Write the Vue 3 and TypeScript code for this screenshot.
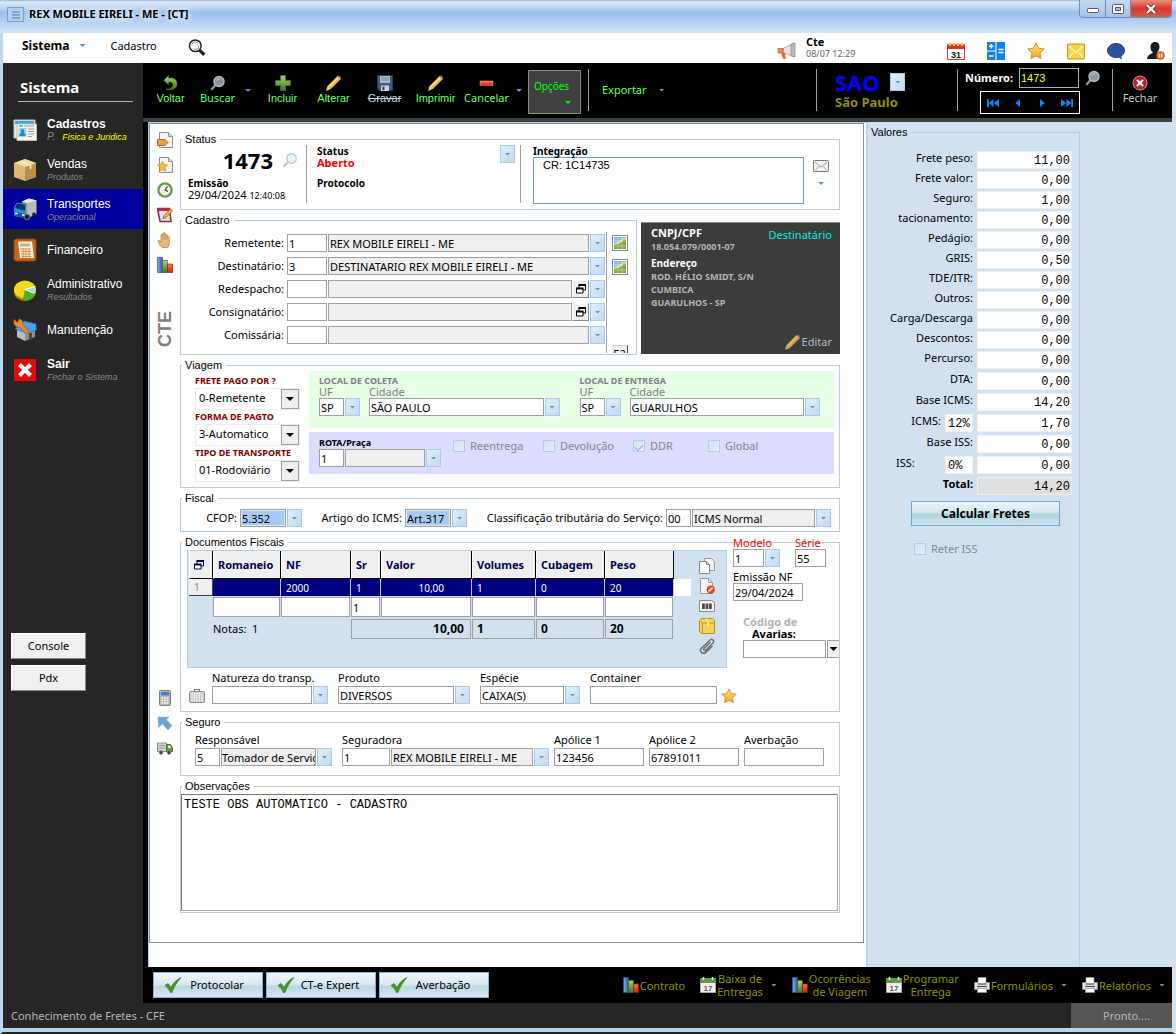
<script setup lang="ts">
import { ref } from 'vue'

interface MenuItem { label: string; sub?: string; icon: string; bold?: boolean; active?: boolean; prefix?: string }
interface Tool { label: string; icon: string; arrow?: boolean; wide?: boolean; off?: boolean; narrow?: boolean }
interface Party { id: string; label: string; code: string; name: string; lookup?: boolean }
interface ValueRow { id: string; label: string; value: string; rate?: string; total?: boolean; left?: boolean }

const menu: MenuItem[] = [
  { label: 'Cadastros', sub: 'Fisica e Juridica', icon: 'cards', bold: true, prefix: 'P.' },
  { label: 'Vendas', sub: 'Produtos', icon: 'box' },
  { label: 'Transportes', sub: 'Operacional', icon: 'bluetruck', active: true },
  { label: 'Financeiro', icon: 'ledger' },
  { label: 'Administrativo', sub: 'Resultados', icon: 'pie' },
  { label: 'Manutenção', icon: 'house' },
  { label: 'Sair', sub: 'Fechar o Sistema', icon: 'exit', bold: true },
]

const topIcons = [
  { icon: 'cal31', label: 'Agenda', day: '31' },
  { icon: 'calcblue', label: 'Calculadora' },
  { icon: 'star', label: 'Favoritos' },
  { icon: 'mail', label: 'Mensagens' },
  { icon: 'chat', label: 'Chat' },
  { icon: 'user', label: 'Usuário' },
]

const tools: Tool[] = [
  { label: 'Voltar', icon: 'back', narrow: true },
  { label: 'Buscar', icon: 'lens', arrow: true, wide: true, narrow: true },
  { label: 'Incluir', icon: 'plus' },
  { label: 'Alterar', icon: 'pencil' },
  { label: 'Gravar', icon: 'disk', off: true },
  { label: 'Imprimir', icon: 'pencil' },
  { label: 'Cancelar', icon: 'minus', arrow: true, wide: true },
]

const railTop = ['pagetag', 'pagestar', 'clock', 'note', 'hand', 'bars']
const railBottom = ['calc', 'bluearrow', 'greentruck']

const parties: Party[] = [
  { id: 'remetente', label: 'Remetente:', code: '1', name: 'REX MOBILE EIRELI - ME' },
  { id: 'destinatario', label: 'Destinatário:', code: '3', name: 'DESTINATARIO REX MOBILE EIRELI - ME' },
  { id: 'redespacho', label: 'Redespacho:', code: '', name: '', lookup: true },
  { id: 'consignatario', label: 'Consignatário:', code: '', name: '', lookup: true },
  { id: 'comissaria', label: 'Comissária:', code: '', name: '' },
]

const combos = [
  { id: 'pago', label: 'FRETE PAGO POR ?', value: '0-Remetente' },
  { id: 'forma', label: 'FORMA DE PAGTO', value: '3-Automatico' },
  { id: 'tipo', label: 'TIPO DE TRANSPORTE', value: '01-Rodoviário' },
]

const places = [
  { id: 'coleta', title: 'LOCAL DE COLETA', uf: 'SP', city: 'SÃO PAULO' },
  { id: 'entrega', title: 'LOCAL DE ENTREGA', uf: 'SP', city: 'GUARULHOS' },
]

const flags = ref([
  { id: 'reentrega', label: 'Reentrega', on: false },
  { id: 'devolucao', label: 'Devolução', on: false },
  { id: 'ddr', label: 'DDR', on: true },
  { id: 'global', label: 'Global', on: false },
])

const docCols = ['Romaneio', 'NF', 'Sr', 'Valor', 'Volumes', 'Cubagem', 'Peso']
const docRow = ['', '2000', '1', '10,00', '1', '0', '20']
const docNew = ['', '', '1', '', '', '', '']
const docIcons = ['copy', 'pageno', 'barcode', 'yellowbox', 'clip']

const values: ValueRow[] = [
  { id: 'v1', label: 'Frete peso:', value: '11,00' },
  { id: 'v2', label: 'Frete valor:', value: '0,00' },
  { id: 'v3', label: 'Seguro:', value: '1,00' },
  { id: 'v4', label: 'tacionamento:', value: '0,00' },
  { id: 'v5', label: 'Pedágio:', value: '0,00' },
  { id: 'v6', label: 'GRIS:', value: '0,50' },
  { id: 'v7', label: 'TDE/ITR:', value: '0,00' },
  { id: 'v8', label: 'Outros:', value: '0,00' },
  { id: 'v9', label: 'Carga/Descarga', value: '0,00' },
  { id: 'v10', label: 'Descontos:', value: '0,00' },
  { id: 'v11', label: 'Percurso:', value: '0,00' },
]
const taxes: ValueRow[] = [
  { id: 't1', label: 'DTA:', value: '0,00' },
  { id: 't2', label: 'Base ICMS:', value: '14,20' },
  { id: 't3', label: 'ICMS:', value: '1,70', rate: '12%' },
  { id: 't4', label: 'Base ISS:', value: '0,00' },
  { id: 't5', label: 'ISS:', value: '0,00', rate: '0%', left: true },
  { id: 't6', label: 'Total:', value: '14,20', total: true },
]

const reports = [
  { lines: ['Contrato'], icon: 'bars', arrow: false },
  { lines: ['Baixa de', 'Entregas'], icon: 'cal17', arrow: true },
  { lines: ['Ocorrências', 'de Viagem'], icon: 'bars', arrow: false },
  { lines: ['Programar', 'Entrega'], icon: 'cal17', arrow: false },
  { lines: ['Formulários'], icon: 'printer', arrow: true },
  { lines: ['Relatórios'], icon: 'printer', arrow: true },
]

const numero = ref('1473')
const integracao = ref('CR: 1C14735')
const obs = ref('TESTE OBS AUTOMATICO - CADASTRO')
</script>

<template>
  <svg class="defs" width="0" height="0" aria-hidden="true">
    <defs>
      <linearGradient id="g-green" x1="0" y1="0" x2="0" y2="1"><stop offset="0" stop-color="#a9d27a" /><stop offset="1" stop-color="#3f7a1c" /></linearGradient>
      <linearGradient id="g-blue" x1="0" y1="0" x2="1" y2="0"><stop offset="0" stop-color="#8ab4e8" /><stop offset="1" stop-color="#24509c" /></linearGradient>
      <linearGradient id="g-gold" x1="0" y1="0" x2="0" y2="1"><stop offset="0" stop-color="#ffe680" /><stop offset="1" stop-color="#f0a62a" /></linearGradient>
      <linearGradient id="g-red" x1="0" y1="0" x2="0" y2="1"><stop offset="0" stop-color="#ff7a4a" /><stop offset="1" stop-color="#d81e0a" /></linearGradient>
    </defs>
    <symbol id="i-mag" viewBox="0 0 16 16"><circle cx="6.500" cy="6" r="5.200" fill="#fff" stroke="#222" stroke-width="1.300" /><circle cx="6.500" cy="6" r="3.300" fill="none" stroke="#888" stroke-width=".8" stroke-dasharray="7 4" /><path d="M10.300 10 14.500 14" stroke="#222" stroke-width="2.800" /></symbol>
    <symbol id="i-lens" viewBox="0 0 16 16"><path d="M6 9.500 2 14" stroke="#8f959b" stroke-width="2.400" stroke-linecap="round" /><circle cx="9" cy="6.500" r="5" fill="#8c96a2" stroke="#b9bec4" stroke-width="1.400" /><path d="M6.500 5.500Q8 3.500 10 3.800" stroke="#c8d2dc" fill="none" /></symbol>
    <symbol id="i-lenslight" viewBox="0 0 16 16"><path d="M6 10 2 14" stroke="#c8c8c8" stroke-width="2.200" stroke-linecap="round" /><circle cx="9.500" cy="6.500" r="4.800" fill="#e4f0fa" stroke="#bfc8d0" stroke-width="1.300" /></symbol>
    <symbol id="i-horn" viewBox="0 0 20 18"><path d="M6 6.500 17 1v14L6 10.500z" fill="#e4e4e4" stroke="#999" stroke-width=".8" /><path d="M14 2.500 18 1v14l-4-1.500z" fill="#bcbcbc" stroke="#888" stroke-width=".7" /><path d="M1 6.500h5v4.500H1z" fill="#f08a5a" stroke="#d0582c" stroke-width=".7" /><path d="M4 11h4l1 6H6z" fill="#ea6a34" /></symbol>
    <symbol id="i-cal31" viewBox="0 0 18 18"><path d="M.5 3h17v14.500H.5z" fill="#fff" stroke="#c33" /><path d="M0 2.500h18V7H0z" fill="#e03030" /><path d="M2 1h2v3H2zM6 1h2v3H6zM10 1h2v3h-2zM14 1h2v3h-2z" fill="#f7d038" /></symbol>
    <symbol id="i-calcblue" viewBox="0 0 18 18"><path d="M0 0h8.500v8.500H0zM9.500 0H18v18H9.500zM0 9.500h8.500V18H0z" fill="#1380ee" /><path d="M2 4.300h4.500M4.250 2v4.500M2 14h4.500M11.500 7.500h5M11.500 10.500h5" stroke="#fff" stroke-width="1.500" /></symbol>
    <symbol id="i-star" viewBox="0 0 18 18"><path d="M9 1l2.500 5.200 5.700.7-4.200 4 1.100 5.700L9 13.800l-5.100 2.800L5 10.900.8 6.900l5.700-.7z" fill="url(#g-gold)" stroke="#d98a2a" stroke-linejoin="round" /></symbol>
    <symbol id="i-mail" viewBox="0 0 18 18"><rect x=".5" y="2" width="17" height="15" rx="1" fill="#f6d54a" stroke="#c79a1c" /><path d="M2 4l7 6.500L16 4M2 15.500l4.500-5M16 15.500l-4.500-5" fill="none" stroke="#fff3b0" stroke-width="1.300" /></symbol>
    <symbol id="i-chat" viewBox="0 0 18 18"><ellipse cx="9" cy="8.500" rx="8.500" ry="7" fill="#2c52a0" stroke="#1d3c80" /><path d="M10 14.500l5 3-1-5z" fill="#2c52a0" /></symbol>
    <symbol id="i-user" viewBox="0 0 18 18"><path d="M8 0c3.200 0 4.500 2.300 4.500 5S11 9.500 10 10.500c1.500 1.500 5 1.500 6 6.500H0c.5-4.500 4.500-5 6-6.500C4.500 9.500 3.500 7.700 3.500 5S5 0 8 0z" fill="#1b1b1b" /><circle cx="13.500" cy="13.500" r="4" fill="#e8763a" stroke="#b04a18" stroke-width=".6" /><path d="M12.300 11.700v3.600M14.700 11.700v3.600" stroke="#fff" stroke-width="1.200" /></symbol>
    <symbol id="i-back" viewBox="0 0 16 16"><path d="M5.500 3.200C11.500 2 14.500 5.500 14 9.500 13.500 13.500 9 16 3 14.200c4 .2 6.800-1.500 7-4.300C10.100 7.500 8.300 6.800 5.500 7.200V10L.8 5.200 5.500.5z" fill="url(#g-green)" stroke="#4c7d28" stroke-width=".6" /></symbol>
    <symbol id="i-plus" viewBox="0 0 16 16"><path d="M5.500.5h5v5h5v5h-5v5h-5v-5h-5v-5h5z" fill="url(#g-green)" stroke="#3d701b" stroke-width=".8" /></symbol>
    <symbol id="i-minus" viewBox="0 0 16 16"><path d="M1 6h13v4.500H1z" fill="url(#g-red)" stroke="#f9a080" stroke-width=".5" /></symbol>
    <symbol id="i-pencil" viewBox="0 0 16 16"><path d="M0 16l1.500-5L4.700 14z" fill="#e8cfa0" /><path d="M1.500 11 10.500 2l3.200 3.200-9 9z" fill="#f6b93a" /><path d="M2.700 12.200l9-9" stroke="#ffe9a6" stroke-width="1.200" /><path d="M10.500 2l1-1 3.200 3.200-1 1z" fill="#ddd" /><path d="M11.500 1c1.500-1.500 4.700 1.500 3.200 3.200z" fill="#e0552c" /></symbol>
    <symbol id="i-disk" viewBox="0 0 16 16"><path d="M.5.5h15v15H2.500l-2-2z" fill="#3c5a86" stroke="#28406a" /><path d="M3 1h10v7H3z" fill="#aeb9c6" /><path d="M4 3h8M4 5h8" stroke="#76869a" /><path d="M4 10.500h8V16H4z" fill="#cdd3da" /><path d="M5.500 11.500h2V15h-2z" fill="#2c4570" /></symbol>
    <symbol id="i-close" viewBox="0 0 16 16"><circle cx="8" cy="8" r="7" fill="#b8202a" stroke="#e0a0a0" stroke-width=".9" /><path d="M5 5l6 6M11 5l-6 6" stroke="#fff" stroke-width="2" /></symbol>
    <symbol id="i-first" viewBox="0 0 12 10"><path d="M0 1h1.800v8H0zM6.500 1v8L1.800 5zM12 1v8L6.800 5z" fill="#1585ff" /></symbol>
    <symbol id="i-prev" viewBox="0 0 12 10"><path d="M8 1v8L3.500 5z" fill="#1585ff" /></symbol>
    <symbol id="i-next" viewBox="0 0 12 10"><path d="M4 1v8L8.500 5z" fill="#1585ff" /></symbol>
    <symbol id="i-last" viewBox="0 0 12 10"><path d="M12 1h-1.800v8H12zM5.500 1v8l4.700-4zM0 1v8l5.200-4z" fill="#1585ff" /></symbol>
    <symbol id="i-cards" viewBox="0 0 24 24"><path d="M1 2h21v18H1z" fill="#dfe9ee" stroke="#b9c4ca" /><path d="M2 3h19v3H2z" fill="#3aa8dc" /><path d="M4 6h19.500v16.500H4z" fill="#f7f4ec" stroke="#c2beb2" /><path d="M5.500 10h8v9h-8z" fill="#9fd4f0" /><path d="M9.500 11a1.900 1.900 0 0 1 1 3.400c1.500.6 2 1.600 2 3.600h-6c0-2 .5-3 2-3.600a1.900 1.900 0 0 1 1-3.400z" fill="#2c86bc" /><path d="M11 8h10M15 11h6M15 13.500h6M15 16h6M15 18.500h4" stroke="#9a9a9a" /><path d="M6 8h4" stroke="#3aa8dc" stroke-width="1.500" /></symbol>
    <symbol id="i-box" viewBox="0 0 24 24"><path d="M1 5 12 1l11 4v14l-11 4-11-4z" fill="#d9b877" /><path d="M12 9 23 5v14l-11 4z" fill="#b98f4b" /><path d="M1 5 12 1l11 4-11 4z" fill="#efd9a6" /><path d="M5.500 3.500l11 4v4l2-.7V6.700l-11-4z" fill="#f9ecc9" opacity=".8" /></symbol>
    <symbol id="i-bluetruck" viewBox="0 0 24 24"><path d="M9 3.500 16 .5l7.500 2v14L14 20z" fill="#b7b9bf" /><path d="M9 3.500 14 5v14.500L9 17z" fill="#8d9097" /><path d="M14 5l9.500-2.500L16 .5 9 3.500z" fill="#e8e9ec" /><path d="M1 9l3-4.500 9 1.500v14L1 18z" fill="#2c8fd0" /><path d="M2 10l2-4.500 8 1.200v6z" fill="#123450" /><path d="M1.500 14l10.500 2v4L1.500 18z" fill="#1b5f96" /><circle cx="14" cy="19" r="2.800" fill="#222" stroke="#777" /><circle cx="21" cy="16.500" r="2" fill="#222" /><path d="M2 15.500h2.500M9 17h2.500" stroke="#fff" stroke-width="1.500" /></symbol>
    <symbol id="i-ledger" viewBox="0 0 24 24"><rect x="1" y="1" width="22" height="22" rx="2" fill="#c9641a" stroke="#8a4410" /><path d="M5 3.500h14L21 20H7z" fill="#f6eedd" /><path d="M7 5.500h10v3H7z" fill="#a6c979" /><path d="M7.500 11h10M8 13.500h10M8 16h10M8.500 18.500h10M10 10v10M13 10v10M16 10v10" stroke="#cf8a4a" stroke-width=".9" /></symbol>
    <symbol id="i-pie" viewBox="0 0 24 24"><ellipse cx="12" cy="14" rx="11" ry="9" fill="#a88a10" /><ellipse cx="12" cy="11.500" rx="11" ry="9" fill="#f8d81c" /><path d="M12 11.500 22.800 10c.3 2-.2 3.500-1.500 5z" fill="#8fe0f6" /><path d="M12 11.500 22 15.500c-1.500 3.500-3.500 6-8.500 7L10 20.400z" fill="#4cb02a" /><path d="M12 11.500l10.500-3M12 11.500l9.500 4" stroke="#fff" /></symbol>
    <symbol id="i-house" viewBox="0 0 24 24"><path d="M4 11l8 3v9l-8-4z" fill="#b9bcc2" /><path d="M12 14l10-4v9l-10 4z" fill="#8a8e96" /><path d="M2 11 11 3l12 3 .5 6L13 15z" fill="#4a9fe0" stroke="#2670b0" stroke-width=".6" /><path d="M16 15h3v6l-3 1z" fill="#44474c" /><path d="M1 1.500l3.500 3L6 1c3 .5 4.500 3 3.500 5.500l6 6.500c1 2-1 3.500-2.500 2.500L7 9C4 9.500 1 8 1 5z" fill="#f08a24" stroke="#b45c10" stroke-width=".7" /></symbol>
    <symbol id="i-exit" viewBox="0 0 24 24"><path d="M1 1h22v22H1z" fill="#e00a0a" /><path d="M6.500 6.500l11 11M17.500 6.500l-11 11" stroke="#fff" stroke-width="4" /></symbol>
    <symbol id="i-pagetag" viewBox="0 0 16 16"><path d="M2.500.5h9l4 4v11h-13z" fill="#f4f4f4" stroke="#8f8f8f" /><path d="M11.500.5v4h4" fill="#ddd" stroke="#8f8f8f" /><path d="M.5 7.500H8l3 3-3 3H.5z" fill="#f59a42" stroke="#c8641a" /></symbol>
    <symbol id="i-pagestar" viewBox="0 0 16 16"><path d="M2.500.5h9l4 4v11h-13z" fill="#f4f4f4" stroke="#8f8f8f" /><path d="M11.500.5v4h4" fill="#ddd" stroke="#8f8f8f" /><path d="M5.500 4.500 7 7.500l3.500.5L8 10.500l.5 3.500-3-1.500-3 1.500.5-3.500L.5 8 4 7.500z" fill="#f8c040" stroke="#c98a1c" stroke-width=".8" /></symbol>
    <symbol id="i-clock" viewBox="0 0 16 16"><circle cx="8" cy="8" r="6.600" fill="#f6f6f0" stroke="#6b9a4a" stroke-width="2.400" /><path d="M10.500 4.500 8 8l3 1.500" fill="none" stroke="#333" stroke-width="1.200" /></symbol>
    <symbol id="i-note" viewBox="0 0 16 16"><path d="M.5 1.500h12l1.500 13H3z" fill="#dce4f6" stroke="#a02838" stroke-width="1.600" /><path d="M.5 1h12v3H1z" fill="#b52a3c" /><path d="M6 11.500 7 8.500 13.500 2l2 2L9 10.500z" fill="#f5b63a" stroke="#8a4a14" stroke-width=".7" /></symbol>
    <symbol id="i-hand" viewBox="0 0 16 16"><path d="M5 15.500C3 13.500 1.500 11 1 8.500c.8-.9 2 0 3 1.500V3c.2-1.300 1.800-1.300 2 0V1.500c.3-1.200 2-1.200 2.200 0V3c.3-1 1.900-1 2.100.2V5c.4-1 2-.8 2 .4V11c0 2-.8 3.500-1.800 4.500z" fill="#e8b878" stroke="#a87838" stroke-width=".7" /><path d="M6 3v5M8.200 3v5M10.300 4v4" stroke="#a87838" stroke-width=".6" /></symbol>
    <symbol id="i-bars" viewBox="0 0 16 16"><path d="M.5.5h5v15h-5z" fill="url(#g-blue)" stroke="#24509c" stroke-width=".7" /><path d="M5.500 3.500h5v12h-5z" fill="url(#g-green)" stroke="#3f6c1f" stroke-width=".7" /><path d="M10.500 7h5v8.500h-5z" fill="url(#g-red)" stroke="#8c1c10" stroke-width=".7" /></symbol>
    <symbol id="i-calc" viewBox="0 0 16 16"><rect x="2.500" y=".5" width="11" height="15" rx="1" fill="#b8b8b8" stroke="#7c7c7c" /><path d="M4 2h8v3.500H4z" fill="#3e7fd0" /><path d="M4.500 8h7M4.500 10.500h7M4.500 13h7" stroke="#fff" stroke-width="1.600" stroke-dasharray="1.600 1" /></symbol>
    <symbol id="i-bluearrow" viewBox="0 0 16 16"><path d="M1 2h11L9.500 4.800 15 10.500 11 15 5.500 9 1.500 12.500z" fill="#6ca3cc" stroke="#8fb9d8" stroke-width=".6" /></symbol>
    <symbol id="i-greentruck" viewBox="0 0 16 16"><path d="M.5 3h9v8.500h-9z" fill="#d4d4d4" stroke="#8a8a8a" /><path d="M2 5.500h6M2 8h6" stroke="#9a9a9a" /><path d="M9.500 4.500h4l2 3v4h-6z" fill="#6aa032" stroke="#47761c" /><path d="M11 5.500h2l1.200 2.500H11z" fill="#e4f0d4" /><circle cx="4" cy="12.500" r="1.900" fill="#444" stroke="#999" stroke-width=".6" /><circle cx="12" cy="12.500" r="1.900" fill="#444" stroke="#999" stroke-width=".6" /></symbol>
    <symbol id="i-envelope" viewBox="0 0 16 12"><rect x=".5" y=".5" width="15" height="11" rx="1" fill="#f2f2f2" stroke="#777" /><path d="M2 2l6 5 6-5M2 10.500l4-4M14 10.500l-4-4" fill="none" stroke="#999" /></symbol>
    <symbol id="i-map" viewBox="0 0 14 14"><path d="M1 1h12v12H1z" fill="#7ec0f0" /><path d="M1 8l5-1 4-4h3v10H1z" fill="#7aa83a" /><path d="M1 8l5-1 4-4h3" fill="none" stroke="#f0e48a" stroke-width="1.600" /><path d="M5 1v12M9 1v12M1 5h12M1 10h12" stroke="#fff" stroke-width=".4" /></symbol>
    <symbol id="i-windows" viewBox="0 0 10 10"><path d="M3 1h6.500v5H3z" fill="#fff" stroke="currentColor" /><path d="M2.500 1h7.500" stroke="currentColor" stroke-width="2" /><path d="M.5 4.500H7v4.500H.5z" fill="#fff" stroke="currentColor" /><path d="M0 4.500h7.500" stroke="currentColor" stroke-width="2" /></symbol>
    <symbol id="i-copy" viewBox="0 0 16 16"><path d="M5.500.5h7l3 3v9h-10z" fill="#f0f0f0" stroke="#999" /><path d="M.5 3.500h7l3 3v9H.5z" fill="#fff" stroke="#888" /><path d="M7.500 3.500v3h3" fill="none" stroke="#888" /></symbol>
    <symbol id="i-pageno" viewBox="0 0 16 16"><path d="M1.500.5h8l4 4v11h-12z" fill="#f6f6f6" stroke="#999" /><path d="M9.500.5v4h4" fill="none" stroke="#999" /><circle cx="11.700" cy="11.500" r="3.800" fill="#e8502c" stroke="#b83010" stroke-width=".6" /><path d="M9.500 13.300l4.200-3.600" stroke="#fff" stroke-width="1.500" /></symbol>
    <symbol id="i-barcode" viewBox="0 0 16 16"><path d="M.5 2.500h12l3 2v9H.5z" fill="#fafafa" stroke="#888" /><path d="M3 5.500h2.800v5.500H3zM6.500 5.500h2.800v5.500H6.500zM10 5.500h2.800v5.500H10z" fill="#4c4c4c" /></symbol>
    <symbol id="i-yellowbox" viewBox="0 0 16 16"><path d="M.5 2.500 2.500.5h11l2 2v13h-13l-2-2z" fill="#f7d45a" stroke="#b98d16" /><path d="M.5 2.500 3.500 5v10.500M3.500 5h12" fill="none" stroke="#c99a1c" /><path d="M8 5 6 .5h2.500L10.500 5v5H8z" fill="#fdf0b4" stroke="#d9aa2c" stroke-width=".5" /></symbol>
    <symbol id="i-clip" viewBox="0 0 16 16"><path d="M11.500 4 5 10.500c-1 1.200.5 2.700 1.700 1.700L14 5c2-2.200-.8-5-3-3L2.500 10.200c-3 3 1.300 6.800 4.200 4.200L13.500 8" fill="none" stroke="#6f6f6f" stroke-width="1.500" /></symbol>
    <symbol id="i-case" viewBox="0 0 16 16"><path d="M5.500 3.500V1.500h5v2" fill="none" stroke="#777" stroke-width="1.200" /><rect x=".5" y="3.500" width="15" height="11" rx="1" fill="#cacaca" stroke="#8a8a8a" /><path d="M3 4v10M5.500 4v10M8 4v10M10.500 4v10M13 4v10" stroke="#f0f0f0" /></symbol>
    <symbol id="i-check" viewBox="0 0 18 16"><path d="M1 8.500 4 6.500l3 4C9.500 5.500 12.500 2.500 17 .5 13 5 10 9.500 8 15.500H6.500C5.500 13 3.500 10.500 1 8.500z" fill="#3f9a20" stroke="#2c7414" stroke-width=".6" /></symbol>
    <symbol id="i-cal17" viewBox="0 0 16 16"><path d="M.5 1.500h15v14H.5z" fill="#f2f2f2" stroke="#aaa" /><path d="M0 1h16v5H0z" fill="#5f9a3c" /><path d="M3.500 0v3M12.500 0v3" stroke="#eee" stroke-width="1.500" /></symbol>
    <symbol id="i-printer" viewBox="0 0 16 16"><path d="M4 .5h8v6H4z" fill="#fff" stroke="#999" stroke-width=".7" /><path d="M.5 5.500H4v2h8v-2h3.500V12.500H.5z" fill="#e2e2e2" stroke="#999" stroke-width=".7" /><path d="M3 9.500h10" stroke="#555" stroke-width="1.200" /><path d="M3.500 11.500h9v4h-9z" fill="#fff" stroke="#999" stroke-width=".7" /></symbol>
  </svg>

  <div class="window">
    <header class="title">
      <span class="sysbox" aria-hidden="true"><svg viewBox="0 0 8 8" width="8" height="8"><path d="M0 1h8M0 4h8M0 7h8" stroke="#53779f" stroke-width="1.200" /></svg></span>
      <h1>REX MOBILE EIRELI - ME - [CT]</h1>
      <div class="winbtns">
        <button type="button" class="wb min" aria-label="Minimizar"><svg viewBox="0 0 12 5" width="12" height="5"><rect x=".5" y=".5" width="11" height="4" rx="1" fill="#fff" stroke="#556" /></svg></button>
        <button type="button" class="wb max" aria-label="Restaurar"><svg viewBox="0 0 12 10" width="12" height="10"><rect x=".5" y=".5" width="11" height="9" rx="1" fill="#fff" stroke="#556" /><path d="M3.500 3.500h5v3h-5z" fill="#a4c3ea" stroke="#556" /></svg></button>
        <button type="button" class="wb cls" aria-label="Fechar janela"><svg viewBox="0 0 12 10" width="12" height="10"><path d="M2 1l8 8M10 1 2 9" stroke="#633" stroke-width="3.800" /><path d="M2 1l8 8M10 1 2 9" stroke="#fff" stroke-width="2.400" /></svg></button>
      </div>
    </header>

    <nav class="menubar">
      <a href="#" class="mb-strong">Sistema</a><i class="tri"></i>
      <a href="#" class="mb-link">Cadastro</a>
      <svg class="mag" width="18" height="18"><use href="#i-mag" /></svg>
      <div class="notice">
        <svg width="20" height="18"><use href="#i-horn" /></svg>
        <p><b>Cte</b><span>08/07 12:29</span></p>
      </div>
      <div class="quick">
        <button v-for="t in topIcons" :key="t.icon" type="button" :aria-label="t.label"><svg width="18" height="18"><use :href="'#i-' + t.icon" /><text v-if="t.day" x="9" y="16" class="day31">{{ t.day }}</text></svg></button>
      </div>
    </nav>

    <div class="body">
      <aside class="side">
        <h2>Sistema</h2>
        <ul>
          <li v-for="m in menu" :key="m.label" :class="{ active: m.active }">
            <a href="#">
              <svg width="24" height="24"><use :href="'#i-' + m.icon" /></svg>
              <span class="mtext">
                <span :class="{ strong: m.bold }">{{ m.label }}</span>
                <small v-if="m.sub" :class="{ hot: m.prefix }"><i v-if="m.prefix">{{ m.prefix }}</i><em>{{ m.sub }}</em></small>
              </span>
            </a>
          </li>
        </ul>
        <div class="sidebtns">
          <button type="button">Console</button>
          <button type="button">Pdx</button>
        </div>
      </aside>

      <div class="main">
        <div class="toolbar">
          <template v-for="t in tools" :key="t.label">
            <button type="button" class="tool" :class="{ wide: t.wide, off: t.off, narrow: t.narrow }">
              <svg width="16" height="16"><use :href="'#i-' + t.icon" /></svg><span>{{ t.label }}</span>
            </button>
            <i v-if="t.arrow" class="toolarrow"><i class="tri"></i></i>
          </template>
          <button type="button" class="opcoes"><span>Opções</span><i class="tri"></i></button>
          <button type="button" class="export"><span>Exportar</span><i class="tri"></i></button>
          <div class="branch">
            <div class="brow"><strong>SAO</strong><button type="button" class="drop" aria-label="Escolher filial"><i class="tri"></i></button></div>
            <span>São Paulo</span>
          </div>
          <div class="record">
            <div class="numrow"><label for="numero">Número:</label><input id="numero" v-model="numero"><svg width="16" height="16"><use href="#i-lens" /></svg></div>
            <div class="navbox">
              <button type="button" aria-label="Primeiro"><svg width="12" height="10"><use href="#i-first" /></svg></button>
              <button type="button" aria-label="Anterior"><svg width="12" height="10"><use href="#i-prev" /></svg></button>
              <button type="button" aria-label="Próximo"><svg width="12" height="10"><use href="#i-next" /></svg></button>
              <button type="button" aria-label="Último"><svg width="12" height="10"><use href="#i-last" /></svg></button>
            </div>
          </div>
          <button type="button" class="fechar"><svg width="16" height="16"><use href="#i-close" /></svg><span>Fechar</span></button>
        </div>

        <div class="work">
          <main class="pane">
            <div class="panel">
              <div class="rail">
                <svg v-for="r in railTop" :key="r" width="16" height="16"><use :href="'#i-' + r" /></svg>
                <span class="cte">CTE</span>
                <svg v-for="r in railBottom" :key="r" width="16" height="16"><use :href="'#i-' + r" /></svg>
              </div>

              <form class="form" @submit.prevent>
                <fieldset class="fs-status">
                  <legend>Status</legend>
                  <div class="status">
                    <div class="s1">
                      <div class="bignum">1473<svg width="16" height="16"><use href="#i-lenslight" /></svg></div>
                      <b>Emissão</b>
                      <span>29/04/2024 <small>12:40:08</small></span>
                    </div>
                    <div class="s2">
                      <div><b>Status</b><strong>Aberto</strong><b class="prot">Protocolo</b></div>
                      <button type="button" class="drop" aria-label="Mudar status"><i class="tri"></i></button>
                    </div>
                    <div class="s3">
                      <label for="integ">Integração</label>
                      <textarea id="integ" v-model="integracao"></textarea>
                    </div>
                    <div class="s4"><svg width="16" height="12"><use href="#i-envelope" /></svg><i class="tri"></i></div>
                  </div>
                </fieldset>

                <div class="pair">
                  <fieldset class="fs-cad">
                    <legend>Cadastro</legend>
                    <div class="cad">
                      <div class="parties">
                        <div v-for="p in parties" :key="p.id" class="party">
                          <label :for="p.id">{{ p.label }}</label>
                          <input :id="p.id" :value="p.code">
                          <div class="named">
                            <input class="gray" :value="p.name" :aria-label="p.label + ' nome'" readonly>
                            <button v-if="p.lookup" type="button" class="look" aria-label="Localizar"><svg width="10" height="10"><use href="#i-windows" /></svg></button>
                          </div>
                          <button type="button" class="drop" :aria-label="'Lista ' + p.label"><i class="tri"></i></button>
                        </div>
                      </div>
                      <div class="maps">
                        <button type="button" aria-label="Mapa do remetente"><svg width="14" height="14"><use href="#i-map" /></svg></button>
                        <button type="button" aria-label="Mapa do destinatário"><svg width="14" height="14"><use href="#i-map" /></svg></button>
                        <span class="cut">E2</span>
                      </div>
                    </div>
                  </fieldset>
                  <section class="card">
                    <div class="chead"><b>CNPJ/CPF</b><span>Destinatário</span></div>
                    <p>18.054.079/0001-07</p>
                    <h3>Endereço</h3>
                    <p>ROD. HÉLIO SMIDT, S/N</p>
                    <p>CUMBICA</p>
                    <p>GUARULHOS - SP</p>
                    <button type="button"><svg width="16" height="16"><use href="#i-pencil" /></svg>Editar</button>
                  </section>
                </div>

                <fieldset class="fs-via">
                  <legend>Viagem</legend>
                  <div class="viagem">
                    <div class="combos">
                      <div v-for="c in combos" :key="c.id">
                        <label :for="c.id">{{ c.label }}</label>
                        <div class="combo"><select :id="c.id"><option>{{ c.value }}</option></select><span><i class="tri dark"></i></span></div>
                      </div>
                    </div>
                    <div class="zones">
                      <div class="green">
                        <div v-for="p in places" :key="p.id" class="place">
                          <b>{{ p.title }}</b>
                          <div class="placerow">
                            <div class="uf"><label :for="p.id + 'uf'">UF</label><div class="row"><input :id="p.id + 'uf'" :value="p.uf"><button type="button" class="drop" aria-label="Lista de UF"><i class="tri"></i></button></div></div>
                            <div class="city"><label :for="p.id + 'ci'">Cidade</label><div class="row"><input :id="p.id + 'ci'" :value="p.city"><button type="button" class="drop" aria-label="Lista de cidades"><i class="tri"></i></button></div></div>
                          </div>
                        </div>
                      </div>
                      <div class="purple">
                        <div class="rota">
                          <label for="rota">ROTA/Praça</label>
                          <div class="row"><input id="rota" class="w25" value="1"><input class="gray w80" aria-label="Nome da rota" readonly><button type="button" class="drop" aria-label="Lista de rotas"><i class="tri"></i></button></div>
                        </div>
                        <div class="flags">
                          <label v-for="f in flags" :key="f.id" class="chk"><input v-model="f.on" type="checkbox" disabled>{{ f.label }}</label>
                        </div>
                      </div>
                    </div>
                  </div>
                </fieldset>

                <fieldset class="fs-fis">
                  <legend>Fiscal</legend>
                  <div class="fiscal">
                    <label for="cfop" class="l1">CFOP:</label><input id="cfop" class="sel" value="5.352"><button type="button" class="drop" aria-label="Lista CFOP"><i class="tri"></i></button>
                    <label for="artigo" class="l2">Artigo do ICMS:</label><input id="artigo" class="sel" value="Art.317"><button type="button" class="drop" aria-label="Lista de artigos"><i class="tri"></i></button>
                    <label for="classif" class="l3">Classificação tributária do Serviço:</label><input id="classif" class="w25" value="00"><input class="gray grow" value="ICMS Normal" aria-label="Descrição da classificação" readonly><button type="button" class="drop" aria-label="Lista de classificações"><i class="tri"></i></button>
                  </div>
                </fieldset>

                <fieldset class="fs-doc">
                  <legend>Documentos Fiscais</legend>
                  <div class="docs">
                    <div class="docpanel">
                      <table>
                        <colgroup><col class="c0"><col class="c1"><col class="c2"><col class="c3"><col class="c4"><col class="c5"><col class="c6"><col class="c7"><col></colgroup>
                        <thead><tr><th class="cor"><svg width="10" height="10"><use href="#i-windows" /></svg></th><th v-for="c in docCols" :key="c">{{ c }}</th><td></td></tr></thead>
                        <tbody>
                          <tr class="cur"><th>1</th><td v-for="(c, i) in docRow" :key="i" :class="{ num: i === 3 }">{{ c }}</td><td class="pad"></td></tr>
                          <tr class="new"><td></td><td v-for="(c, i) in docNew" :key="i"><input :value="c" :aria-label="docCols[i]"></td><td></td></tr>
                        </tbody>
                        <tfoot><tr><td></td><td colspan="2" class="notas">Notas:&nbsp; 1</td><td colspan="2"><output class="r">10,00</output></td><td><output>1</output></td><td><output>0</output></td><td><output>20</output></td><td></td></tr></tfoot>
                      </table>
                      <div class="docicons"><svg v-for="d in docIcons" :key="d" width="16" height="16"><use :href="'#i-' + d" /></svg></div>
                    </div>
                    <div class="docside">
                      <div class="ms">
                        <div><label for="modelo" class="red">Modelo</label><div class="row"><input id="modelo" class="w31" value="1"><button type="button" class="drop" aria-label="Lista de modelos"><i class="tri"></i></button></div></div>
                        <div><label for="serie" class="red">Série</label><input id="serie" class="w31" value="55"></div>
                      </div>
                      <label for="emnf">Emissão NF</label>
                      <input id="emnf" class="w70" value="29/04/2024">
                      <div class="avar">
                        <label for="avar"><span>Código de</span><b>Avarias:</b></label>
                        <div class="row"><input id="avar"><button type="button" class="cutbtn" aria-label="Lista de avarias"><i class="tri dark"></i></button></div>
                      </div>
                    </div>
                  </div>
                  <div class="goods">
                    <svg width="16" height="16"><use href="#i-case" /></svg>
                    <div class="f g116"><label for="nat">Natureza do transp.</label><div class="row"><input id="nat"><button type="button" class="drop" aria-label="Lista de naturezas"><i class="tri"></i></button></div></div>
                    <div class="f g132"><label for="prod">Produto</label><div class="row"><input id="prod" value="DIVERSOS"><button type="button" class="drop" aria-label="Lista de produtos"><i class="tri"></i></button></div></div>
                    <div class="f g100"><label for="esp">Espécie</label><div class="row"><input id="esp" value="CAIXA(S)"><button type="button" class="drop" aria-label="Lista de espécies"><i class="tri"></i></button></div></div>
                    <div class="f g127"><label for="cont">Container</label><div class="row"><input id="cont"></div></div>
                    <svg class="st" width="16" height="16"><use href="#i-star" /></svg>
                  </div>
                </fieldset>

                <fieldset class="fs-seg">
                  <legend>Seguro</legend>
                  <div class="seguro">
                    <div class="f g137"><label for="resp">Responsável</label><div class="row"><input id="resp" class="w25" value="5"><input class="gray tight" value="Tomador de Serviço" aria-label="Nome do responsável" readonly><button type="button" class="drop" aria-label="Lista de responsáveis"><i class="tri"></i></button></div></div>
                    <div class="f g207"><label for="segr">Seguradora</label><div class="row"><input id="segr" class="w48" value="1"><input class="gray" value="REX MOBILE EIRELI - ME" aria-label="Nome da seguradora" readonly><button type="button" class="drop" aria-label="Lista de seguradoras"><i class="tri"></i></button></div></div>
                    <div class="f g90"><label for="ap1">Apólice 1</label><div class="row"><input id="ap1" value="123456"></div></div>
                    <div class="f g90"><label for="ap2">Apólice 2</label><div class="row"><input id="ap2" value="67891011"></div></div>
                    <div class="f g80"><label for="averb">Averbação</label><div class="row"><input id="averb"></div></div>
                  </div>
                </fieldset>

                <fieldset class="fs-obs">
                  <legend>Observações</legend>
                  <textarea v-model="obs" class="obs" aria-label="Observações"></textarea>
                </fieldset>
              </form>
            </div>
            <div class="strip"></div>
          </main>

          <aside class="valores">
            <fieldset>
              <legend>Valores</legend>
              <div class="vlist">
                <div v-for="v in values" :key="v.id" class="vrow"><label :for="v.id">{{ v.label }}</label><input :id="v.id" :value="v.value"></div>
              </div>
              <div class="vlist tax">
                <div v-for="v in taxes" :key="v.id" class="vrow" :class="{ total: v.total, left: v.left }">
                  <label :for="v.id">{{ v.label }}</label><input v-if="v.rate" class="rate" :value="v.rate" :aria-label="v.label + ' alíquota'"><input :id="v.id" :value="v.value">
                </div>
              </div>
              <button type="button" class="calcbtn">Calcular Fretes</button>
              <label class="chk reter"><input type="checkbox" disabled>Reter ISS</label>
            </fieldset>
          </aside>
        </div>

        <div class="bottombar">
          <button v-for="b in ['Protocolar', 'CT-e Expert', 'Averbação']" :key="b" type="button" class="act"><svg width="18" height="16"><use href="#i-check" /></svg><span>{{ b }}</span></button>
          <div class="reports">
            <button v-for="r in reports" :key="r.lines[0]" type="button" class="rep"><svg width="16" height="16"><use :href="'#i-' + r.icon" /><text v-if="r.icon === 'cal17'" x="8" y="14" class="day17">17</text></svg><span><span v-for="l in r.lines" :key="l">{{ l }}</span></span><i v-if="r.arrow" class="tri"></i></button>
          </div>
        </div>
      </div>
    </div>

    <footer class="statusbar"><span>Conhecimento de Fretes - CFE</span><output>Pronto....</output></footer>
  </div>
</template>

<style>
html, body { margin: 0; background: #222; }
</style>

<style scoped>
* { box-sizing: border-box; }
.defs { position: absolute; }
.window { min-height: 100vh; display: flex; flex-direction: column; font: 11px/14px "Noto Sans", "Open Sans", sans-serif; color: #000; background: #262626; border-left: 3px solid #bcd7f4; border-right: 4px solid #d2e1f0; border-bottom: 2px solid #222; }
svg { display: block; flex: none; }
button { font: inherit; color: inherit; padding: 0; margin: 0; border: 0; background: none; border-radius: 0; }
a { color: inherit; text-decoration: none; }
h1, h2, h3, p, ul { margin: 0; padding: 0; list-style: none; }
.tri { display: block; width: 6px; height: 3px; background: #5b93d0; clip-path: polygon(0 0, 100% 0, 50% 100%); flex: none; }
.tri.dark { width: 8px; height: 4px; background: #000; }
.day31 { font: 700 9px "Liberation Sans", sans-serif; text-anchor: middle; fill: #111; }
.day17 { font: 700 8px "Liberation Sans", sans-serif; text-anchor: middle; fill: #555; }

.title { height: 33px; margin-left: -3px; margin-right: -4px; padding: 0 4px 0 7px; display: flex; align-items: flex-start; background: linear-gradient(#8fb6e2 0, #dfeaf8 2px, #b6d0f0 9px, #97bfec 12px, #b3d1f3 22px, #d0e2f6 32px); }
.sysbox { width: 17px; height: 15px; margin-top: 7px; border: 1px solid #7d9ec6; background: #b4cfee; display: grid; place-items: center; }
.title h1 { font-size: 11px; line-height: 16px; font-weight: 700; margin: 6px 0 0 5px; text-shadow: 0 0 6px #fff, 0 0 6px #fff; }
.winbtns { margin-left: auto; display: flex; height: 18px; border: 1px solid #6f8fb8; border-top: 0; border-radius: 0 0 4px 4px; overflow: hidden; }
.wb { display: grid; place-items: center; background: linear-gradient(#c5d8f0, #a4c3ea); }
.min { width: 25px; padding-top: 4px; }
.max { width: 25px; border-left: 1px solid #6f8fb8; }
.cls { width: 41px; background: linear-gradient(#e8907c, #d9392c 50%, #d85c48); border-left: 1px solid #6f8fb8; }

.menubar { height: 30px; background: #fff; display: flex; align-items: flex-start; padding: 0 3px 0 19px; }
.mb-strong { font-weight: 700; font-size: 12px; line-height: 16px; margin-top: 5px; }
.menubar > .tri { margin: 11px 25px 0 10px; }
.mb-link { line-height: 16px; margin-top: 5px; width: 48px; }
.mag { margin: 6px 0 0 30px; }
.notice { margin-left: auto; display: flex; gap: 9px; margin-top: 3px; }
.notice > svg { margin-top: 6px; }
.notice p { width: 51px; }
.notice b, .notice span { display: block; line-height: 12px; }
.notice span { font-size: 9px; color: #666; }
.quick { display: flex; gap: 22px; margin: 9px 4px 0 90px; }

.body { flex: 1; display: flex; }
.side { width: 140px; background: #262626; color: #fff; flex: none; }
.side h2 { font-size: 15px; line-height: 20px; margin: 14px 10px 0 15px; padding: 0 0 4px 2px; border-bottom: 1px solid #b4b4b4; }
.side ul { margin-top: 7px; font-family: "Liberation Sans", sans-serif; font-size: 12px; }
.side li a { display: flex; align-items: center; height: 40px; padding: 1px 0 0 10px; gap: 10px; }
.side li.active { background: #00009c; }
.mtext > span { display: block; line-height: 14px; }
.strong { font-weight: 700; }
.mtext small { display: block; font-size: 9px; line-height: 12px; color: #868686; font-style: italic; }
.mtext small i { margin-right: 7px; font-size: 10px; }
.mtext .hot em { color: #ff0; }
.sidebtns { margin: 244px 0 0 8px; display: flex; flex-direction: column; gap: 6px; width: 75px; }
.sidebtns button { height: 26px; background: #f0f0f0; color: #000; border: 1px solid #fff; border-right-color: #888; border-bottom-color: #888; }

.main { flex: 1; min-width: 0; display: flex; flex-direction: column; background: #000; }
.toolbar { height: 59px; border-bottom: 4px solid #404040; display: flex; align-items: flex-start; padding-left: 4px; color: #6eff6e; }
.tool { width: 51px; padding-top: 12px; display: flex; flex-direction: column; align-items: center; font-family: "Liberation Sans", sans-serif; }
.tool.narrow { width: 47px; }
.tool.wide { font-family: "Noto Sans", sans-serif; }
.tool.off { color: #c8d4e8; text-decoration: line-through; }
.toolarrow { width: 16px; padding: 26px 0 0 4px; }
.opcoes { width: 53px; height: 44px; margin-top: 7px; background: #404040; border: 1px solid #8a8a8a; color: #0f0; font-size: 10px; display: flex; flex-direction: column; align-items: center; padding-top: 8px; gap: 8px; }
.opcoes span { line-height: 14px; padding-right: 6px; }
.opcoes .tri { background: #0f0; align-self: flex-end; margin-right: 9px; }
.export { height: 42px; margin: 6px 0 0 7px; padding-left: 13px; border-left: 1px solid #a0a0a0; display: flex; align-items: center; gap: 12px; }
.branch { margin: 6px 0 0 auto; border-left: 1px solid #a0a0a0; width: 141px; height: 42px; padding-left: 18px; }
.brow { display: flex; align-items: center; gap: 11px; height: 26px; }
.brow strong { font-size: 22px; line-height: 26px; color: #00f; }
.branch > span { display: block; font-weight: 700; font-size: 13px; line-height: 14px; color: #909000; }
.record { margin-top: 6px; border-left: 1px solid #a0a0a0; width: 155px; height: 42px; padding-left: 7px; }
.numrow { display: flex; align-items: center; gap: 6px; height: 18px; }
.numrow label { color: #fff; font-weight: 700; width: 48px; }
.numrow input { width: 60px; height: 20px; background: #000; color: #ff0; border-color: #b0b0b0; font-family: "Liberation Sans", sans-serif; }
.navbox { width: 100px; height: 23px; margin: 4px 0 0 15px; border: 1px solid #fff; display: flex; align-items: center; justify-content: space-around; }
.fechar { margin-top: 6px; border-left: 1px solid #a0a0a0; width: 60px; height: 42px; padding: 6px 5px 0 0; display: flex; flex-direction: column; align-items: center; color: #c8c8c8; }

.work { flex: 1; display: flex; padding-left: 5px; }
.pane { flex: 1; min-width: 0; background: #fff; border: 1px solid #a9cdf2; border-bottom: 0; display: flex; flex-direction: column; border-right: 0; padding-right: 2px; }
.panel { flex: 1; border: 1px solid #8c8c8c; display: flex; padding: 1px 23px 0 0; }
.strip { height: 24px; }
.rail { width: 30px; flex: none; padding-top: 7px; display: flex; flex-direction: column; align-items: center; gap: 9px; }
.cte { writing-mode: vertical-rl; transform: rotate(180deg); font: 700 18px/18px "Liberation Sans", sans-serif; color: #808080; margin: 28px 0 334px; height: 37px; }

fieldset { margin: 0; padding: 0; min-width: 0; border: 1px solid #b9cbdc; }
legend { font: 11px/12px "Liberation Sans", sans-serif; padding: 0 4px 0 3px; margin-left: 1px; }
input, textarea, select { font: inherit; margin: 0; padding: 0 1px; min-width: 0; border: 1px solid #a0a0a0; border-radius: 0; background: #fff; color: #000; height: 18px; outline: 0; }
textarea { resize: none; display: block; }
.gray { background: #efefef; }
label { line-height: 12px; display: block; white-space: nowrap; }
.drop { width: 15px; height: 18px; flex: none; display: grid; place-items: center; border: 1px solid #a6cbf0; background: linear-gradient(135deg, #e2edf7, #c2daf0); }
.row { display: flex; gap: 1px; }
.row input { flex: 1; width: 0; }
.row .w25, .w25 { flex: none; width: 25px; }
.row .w80 { flex: none; width: 80px; }
.row .w31, .w31 { flex: none; width: 31px; }
.row .w48 { flex: none; width: 48px; }
.w70 { width: 70px; }
.tight { padding: 0; }

.form { flex: 1; min-width: 0; padding-top: 8px; display: flex; flex-direction: column; gap: 4px; }
.fs-status { height: 77px; }
.status { display: flex; height: 58px; }
.s1 { width: 126px; padding: 2px 8px 0 7px; border-right: 1px solid #a0a0a0; display: flex; flex-direction: column; }
.bignum { font-weight: 700; font-size: 22px; line-height: 26px; display: flex; justify-content: flex-end; align-items: center; gap: 9px; margin-bottom: 4px; }
.status b, .s3 label { font-size: 10px; line-height: 12px; font-weight: 700; display: block; }
.s1 span { line-height: 12px; white-space: nowrap; }
.s1 small { font-size: 9px; }
.s2 { width: 214px; border-right: 1px solid #a0a0a0; display: flex; justify-content: space-between; padding: 0 5px 0 10px; }
.s2 strong { display: block; color: #f00; line-height: 12px; }
.s2 .prot { margin-top: 8px; }
.s3 { flex: 1; padding-left: 12px; }
.s3 textarea { width: 100%; height: 47px; border-color: #6f9bc8; padding: 0 9px; font: 11px/14px "Liberation Sans", sans-serif; }
.s4 { width: 35px; padding: 15px 0 0 9px; }
.s4 .tri { margin: 10px 0 0 5px; }

.pair { display: flex; gap: 4px; height: 141px; }
.fs-cad { flex: 1; }
.cad { display: flex; height: 127px; }
.parties { flex: 1; padding: 8px 1px 0 0; display: flex; flex-direction: column; gap: 5px; }
.party { display: grid; grid-template-columns: 105px 40px 1fr 15px; column-gap: 1px; align-items: center; }
.party label { text-align: right; padding-right: 2px; }
.named { display: flex; background: #efefef; }
.named input { flex: 1; width: 0; }
.look { width: 17px; height: 18px; display: grid; place-items: center; background: #f0f0f0; border: 1px solid #fff; border-right-color: #888; border-bottom-color: #888; }
.maps { width: 30px; margin-top: 6px; border-left: 1px solid #a0a0a0; padding: 3px 0 0 5px; display: flex; flex-direction: column; gap: 8px; overflow: hidden; }
.maps button { width: 16px; height: 16px; flex: none; border: 1px solid #888; }
.cut { width: 16px; height: 16px; flex: none; margin-top: 62px; background: #f0f0f0; border-right: 1px solid #555; border-top: 1px solid #ccc; font-size: 11px; line-height: 16px; text-align: center; }
.card { width: 199px; margin: 8px 0 1px; background: #3c3c3c; border-top: 1px solid #888; color: #b4b4b4; padding: 3px 8px 0 10px; display: flex; flex-direction: column; }
.chead { display: flex; justify-content: space-between; align-items: flex-start; color: #fff; height: 14px; }
.chead span { color: #00f0e0; line-height: 18px; }
.card p { font-size: 9px; font-weight: 700; line-height: 13px; }
.card h3 { font-size: 10px; line-height: 14px; color: #fff; margin-top: 3px; }
.card button { margin: auto 0 4px auto; display: flex; align-items: center; gap: 1px; color: #aebccb; }
.card button svg { opacity: .8; }

.fs-via { height: 129px; }
.viagem { display: flex; }
.combos { width: 128px; padding: 4px 9px 0 14px; display: flex; flex-direction: column; gap: 1px; }
.combos label { font-size: 9px; font-weight: 700; color: #800000; margin-bottom: 1px; }
.combo { display: grid; grid-template-columns: 1fr 18px; height: 22px; border: 1px solid #ececec; }
.combo select { grid-area: 1 / 1 / 2 / 3; appearance: none; border: 0; height: 20px; width: 100%; padding: 0 0 2px 3px; background: #fff; }
.combo span { grid-area: 1 / 2; pointer-events: none; background: #f0f0f0; border: 1px solid #a0a0a0; display: grid; place-items: center; }
.zones { flex: 1; margin-right: 5px; display: flex; flex-direction: column; gap: 4px; }
.green { height: 57px; background: #e6ffe6; padding: 5px 14px 0 10px; display: flex; gap: 20px; }
.place { flex: 1; color: #808080; }
.place b { display: block; font-size: 9px; line-height: 10px; }
.placerow { display: flex; gap: 9px; }
.uf { width: 41px; }
.city { flex: 1; }
.purple { height: 42px; background: #dcdcff; padding: 5px 10px 0; display: flex; gap: 12px; }
.rota label { font-size: 9px; font-weight: 700; }
.flags { display: flex; padding-top: 2px; }
.chk { display: flex; gap: 5px; align-items: center; color: #808890; height: 14px; width: 90px; }
.chk:nth-child(3) { width: 75px; }
.chk input { appearance: none; width: 12px; height: 12px; border: 1px solid #b2cde4; background: linear-gradient(135deg, #cfe2f0, #e4eff8); display: grid; place-items: center; padding: 0; }
.chk input:checked::after { content: ""; width: 7px; height: 4px; border-left: 1px solid #8fa8be; border-bottom: 1px solid #8fa8be; transform: rotate(-45deg); }

.fs-fis { height: 40px; }
.fiscal { display: flex; align-items: center; padding: 5px 8px 0 0; gap: 1px; }
.fiscal label { text-align: right; padding-right: 2px; }
.l1 { width: 58px; }
.l2 { width: 101px; }
.l3 { width: 197px; }
.sel { width: 46px; background: #a6caf0; box-shadow: inset 0 0 0 1px #dfe9f4; }
.grow { flex: 1; width: 0; }

.fs-doc { height: 176px; }
.docs { display: flex; height: 119px; }
.docpanel { flex: 1; margin: 2px 6px 0 6px; background: #d2e1f0; border: 1px solid #b3cfe4; display: flex; height: 118px; }
table { flex: 1; border-spacing: 0; table-layout: fixed; width: 0; align-self: flex-start; margin-left: 1px; }
.c0 { width: 24px; } .c1 { width: 68px; } .c2 { width: 70px; } .c3 { width: 30px; } .c4 { width: 91px; } .c5 { width: 64px; } .c6 { width: 69px; } .c7 { width: 69px; }
td, th { padding: 0; text-align: left; }
thead th { height: 28px; background: #efefef; border-right: 1px solid #000; border-bottom: 1px solid #000; border-left: 1px solid #fff; color: #000050; padding-left: 4px; }
.cor { color: #000050; }
.cur th { height: 17px; line-height: 16px; background: #efefef; border-right: 1px solid #444; border-bottom: 1px solid #444; color: #888; font-weight: 400; padding-left: 5px; font-size: 10px; }
.cur td { background: #000080; color: #fff; border-right: 1px solid #c8c8c8; padding-left: 5px; font-size: 10px; line-height: 16px; }
.cur .num { text-align: right; padding-right: 27px; }
.cur .pad { background: #fff; border: 0; }
.new td { height: 21px; padding: 1px 1px 0 0; }
.new input { display: block; width: 100%; height: 20px; }
.notas { vertical-align: middle; }
tfoot td { padding: 2px 1px 0 0; }
output { display: block; }
tfoot output { height: 20px; line-height: 17px; font-size: 12px; font-weight: 700; border: 1px solid #a0a0a0; padding: 0 6px 0 4px; }
tfoot .r { text-align: right; }
.docicons { width: 35px; padding: 7px 0 0 8px; display: flex; flex-direction: column; gap: 4px; }
.docside { width: 106px; margin-top: -11px; }
.red { color: #f00; }
.ms { display: flex; gap: 15px; margin-bottom: 4px; }
.avar { margin-top: 15px; padding-left: 10px; }
.avar span { display: block; color: #b4b4b4; font-weight: 700; line-height: 12px; }
.avar b { display: block; line-height: 12px; padding-left: 9px; }
.cutbtn { width: 12px; height: 18px; background: #f0f0f0; border: 1px solid #a0a0a0; border-right: 0; display: grid; place-items: center; overflow: hidden; }
.f label { margin-bottom: 2px; }
.goods { display: flex; align-items: flex-end; gap: 10px; padding: 5px 102px 0 8px; }
.goods > svg { margin: 0 -3px 0 0; }
.goods .st { margin: 0 0 0 -6px; }
.goods, .seguro { min-width: 0; }
.g116 { flex: 116 1 0; } .g132 { flex: 132 1 0; } .g100 { flex: 100 1 0; } .g127 { flex: 127 1 0; }
.g137 { flex: 137 1 0; margin-right: 5px; } .g207 { flex: 207 1 0; } .g90 { flex: 90 1 0; } .g80 { flex: 80 1 0; }
.fs-seg { height: 60px; }
.seguro { display: flex; gap: 5px; padding: 6px 15px 0 14px; }
.fs-obs { height: 133px; }
.obs { width: calc(100% - 1px); height: 117px; font: 12px/14px "Liberation Mono", monospace; padding: 3px 2px; border-color: #777 #aaa #aaa #777; margin-top: 2px; }

.valores { width: 306px; flex: none; background: #d2e1f0; border-left: 2px solid #b8d6f4; }
.valores fieldset { width: 212px; border-left-color: transparent; border-bottom: 0; margin-top: 4px; height: calc(100% - 4px); }
.valores legend { margin-left: -1px; }
.vlist { padding: 13px 7px 0 0; display: flex; flex-direction: column; gap: 2px; }
.vlist.tax { padding-top: 3px; gap: 3px; }
.vrow { display: flex; justify-content: flex-end; gap: 4px; }
.vrow label { padding-top: 1px; }
.vrow input { width: 95px; height: 18px; text-align: right; border-color: #f0f0f0; font: 12px/16px "Liberation Mono", monospace; padding: 2px 1px 0; }
.vrow .rate { width: 28px; text-align: left; padding-left: 2px; }
.left label { width: 45px; }
.total label { font-weight: 700; }
.total input { background: #e0e0e0; }
.calcbtn { display: block; width: 149px; height: 25px; margin: 6px 0 0 42px; border: 1px solid #6fa8d0; font-weight: 700; font-size: 12px; background: linear-gradient(#eef5fa, #d3e6ee 45%, #b2d3de 55%, #cfe5ee); }
.reter { margin: 16px 0 0 45px; }

.bottombar { height: 36px; display: flex; align-items: center; padding: 0 7px 0 10px; gap: 3px; }
.act { width: 110px; height: 26px; border: 1px solid #7fb2d4; background: linear-gradient(#f2f7fb, #d6e6f0 50%, #bcd6e2 55%, #d4e8f0); display: flex; align-items: center; padding: 0 10px; }
.act span { flex: 1; text-align: center; }
.reports { margin-left: auto; display: flex; gap: 15px; color: #909000; }
.rep { display: flex; align-items: center; gap: 1px; }
.rep > span > span { display: block; line-height: 13px; }
.rep .tri { margin-left: 7px; }

.statusbar { display: flex; justify-content: space-between; height: 29px; padding-left: 8px; color: #b8b8b8; line-height: 25px; border-bottom: 4px solid #b4d4f4; }
.statusbar output { width: 101px; background: #555; text-align: center; padding-left: 10px; }
</style>
